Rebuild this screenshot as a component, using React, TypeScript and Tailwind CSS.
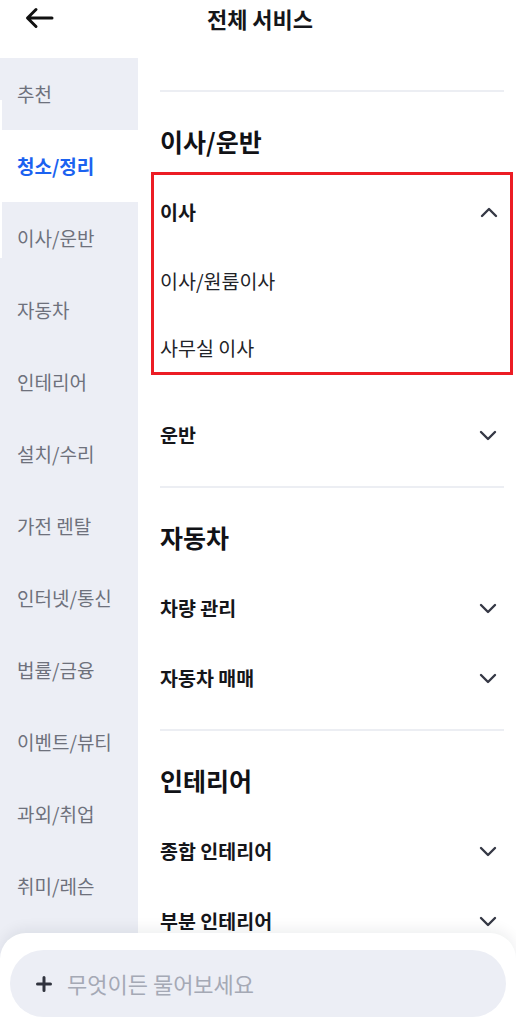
import React from "react";

type Group = { title: string; open?: boolean; items?: string[] };
type Section = { title: string; groups: Group[] };

const categories = [
  "추천",
  "청소/정리",
  "이사/운반",
  "자동차",
  "인테리어",
  "설치/수리",
  "가전 렌탈",
  "인터넷/통신",
  "법률/금융",
  "이벤트/뷰티",
  "과외/취업",
  "취미/레슨",
];

const sections: Section[] = [
  {
    title: "이사/운반",
    groups: [
      { title: "이사", open: true, items: ["이사/원룸이사", "사무실 이사"] },
      { title: "운반" },
    ],
  },
  { title: "자동차", groups: [{ title: "차량 관리" }, { title: "자동차 매매" }] },
  { title: "인테리어", groups: [{ title: "종합 인테리어" }, { title: "부분 인테리어" }] },
];

const font = { fontFamily: '"Noto Sans CJK KR", "Noto Sans", sans-serif' };

function Chevron({ up = false }: { up?: boolean }) {
  return (
    <svg width="18" height="11" viewBox="0 0 18 11" fill="none">
      <path
        d={up ? "M2 9l7-7 7 7" : "M2 2l7 7 7-7"}
        stroke="#353845"
        strokeWidth="2.4"
        strokeLinecap="round"
        strokeLinejoin="round"
      />
    </svg>
  );
}

function GroupRow({ title, up }: { title: string; up?: boolean }) {
  return (
    <div className="flex h-[70px] items-center justify-between pr-[7px]">
      <span className="text-[19.5px] font-bold text-[#15161a]">{title}</span>
      <Chevron up={up} />
    </div>
  );
}

export default function App() {
  return (
    <div className="relative h-screen overflow-hidden bg-white" style={font}>
      {/* header */}
      <div className="h-[58px]">
        <div className="relative flex h-[36px] items-center justify-center">
          <svg
            className="absolute left-[24px] top-[4px]"
            width="30"
            height="28"
            viewBox="0 0 30 28"
            fill="none"
          >
            <path
              d="M28 14H4M12 5.5L3.5 14l8.5 8.5"
              stroke="#111"
              strokeWidth="3"
              strokeLinecap="round"
              strokeLinejoin="round"
            />
          </svg>
          <h1 className="pl-[4px] text-[22px] font-bold text-[#15161a]">전체 서비스</h1>
        </div>
      </div>

      <div className="flex">
        {/* left category list */}
        <div className="relative w-[138px] shrink-0 bg-[#eceef5] pb-[200px]">
          <div className="absolute left-0 top-[42px] h-[158px] w-[2px] bg-white" />
          {categories.map((c) => {
            const active = c === "청소/정리";
            return (
              <div
                key={c}
                className={`flex h-[72px] items-center pl-[17px] text-[19px] ${
                  active ? "bg-white font-bold text-[#1b62f0]" : "text-[#6e717c]"
                }`}
              >
                {c}
              </div>
            );
          })}
        </div>

        {/* right services */}
        <div className="flex-1 pl-[22px] pr-[12px] pt-[32px]">
          {sections.map((s) => (
            <div key={s.title} className="pb-[16px]">
              <div className="h-[2px] bg-[#eceef3]" />
              <div className="h-[85px] pt-[32px]">
                <h2 className="text-[25px] font-bold leading-[34px] text-[#111216]">
                  {s.title}
                </h2>
              </div>
              {s.groups.map((g) =>
                g.open ? (
                  <div
                    key={g.title}
                    className="-mx-[9px] -mt-[5px] mb-[25px] border-[3px] border-[#ec1c24] pl-[6px] pr-[5px] pt-[2px]"
                  >
                    <GroupRow title={g.title} up />
                    <div className="flex h-[68px] items-center text-[19.5px] text-[#222328]">
                      {g.items![0]}
                    </div>
                    <div className="flex h-[57px] items-center pt-[8px] text-[19.5px] text-[#222328]">
                      {g.items![1]}
                    </div>
                  </div>
                ) : (
                  <GroupRow key={g.title} title={g.title} />
                )
              )}
            </div>
          ))}
        </div>
      </div>

      {/* bottom ask bar */}
      <div className="absolute inset-x-0 bottom-0 h-[91px] rounded-t-[26px] bg-white px-[10px] pt-[17px] shadow-[0_-4px_14px_rgba(20,24,40,0.07)]">
        <div className="flex h-[67px] items-center rounded-full bg-[#eceef5] pl-[26px]">
          <svg width="16" height="16" viewBox="0 0 16 16" fill="none">
            <path d="M8 1.5v13M1.5 8h13" stroke="#30333e" strokeWidth="3" strokeLinecap="round" />
          </svg>
          <span className="ml-[15px] text-[22px] text-[#a5a9b5]">무엇이든 물어보세요</span>
        </div>
      </div>
    </div>
  );
}
